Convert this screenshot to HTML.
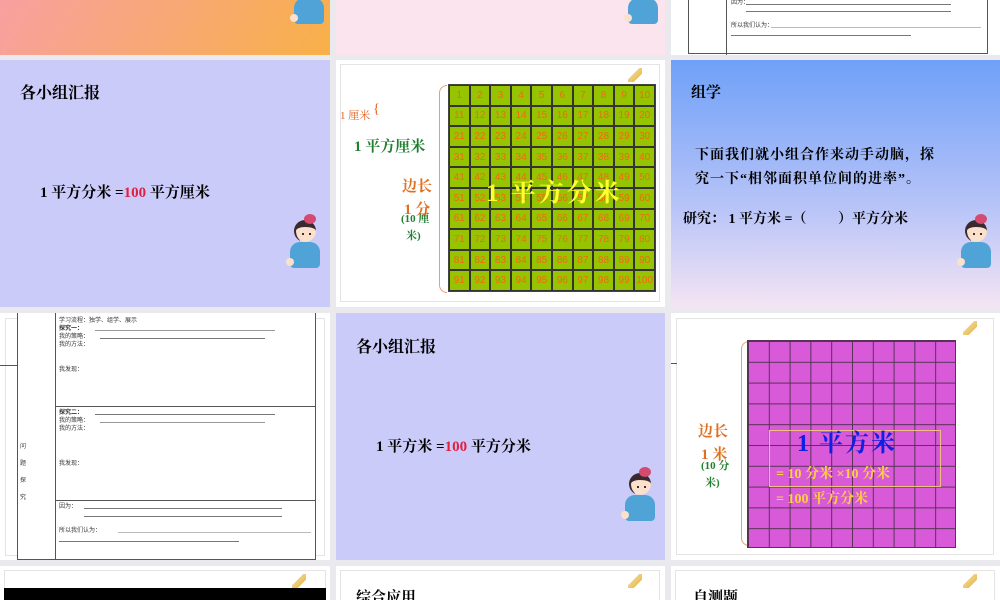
<!DOCTYPE html>
<html><head><meta charset="utf-8"><style>
*{margin:0;padding:0;box-sizing:border-box}
body{width:1000px;height:600px;overflow:hidden;background:#e9e9ee;position:relative;font-family:"Liberation Serif","Noto Serif CJK SC",serif}
.s{position:absolute;overflow:hidden}
.a{position:absolute;white-space:nowrap}
.b{font-weight:bold}
.grid{position:absolute;display:grid;grid-template-columns:repeat(10,1fr);grid-template-rows:repeat(10,1fr);border:1px solid #444}
.grid span{border:0.5px solid #333;display:flex;align-items:center;justify-content:center;font-size:10px;color:#f06a10;font-family:"Liberation Sans",sans-serif}
.girl{position:absolute;width:36px;height:56px}
.girl .h{position:absolute;left:8px;top:6px;width:22px;height:22px;border-radius:50%;background:#fbe0cc;border-top:7px solid #3a2a30;border-left:2px solid #3a2a30}
.girl .h::after{content:"";position:absolute;left:6px;top:6px;width:2px;height:2px;background:#333;box-shadow:7px 0 #333}
.girl .bow{position:absolute;left:18px;top:0;width:12px;height:10px;border-radius:50%;background:#d44a70}
.girl .bd{position:absolute;left:4px;top:28px;width:30px;height:26px;border-radius:10px 10px 4px 4px;background:#4fa3d6}
.girl .hd{position:absolute;left:0;top:44px;width:8px;height:8px;border-radius:50%;background:#fbe0cc}
.frame{position:absolute;border:1px solid #e4e4e4}
.pen{position:absolute;width:14px;height:14px;background:linear-gradient(135deg,transparent 40%,#f0d080 40%,#e8c060 70%,transparent 70%)}
.ln{position:absolute;height:1px;background:#777}
.t{font-family:"Liberation Sans","Noto Sans CJK SC",sans-serif;font-size:6px;color:#333}
</style></head><body>

<div class="s" style="left:0;top:0;width:330px;height:55px;background:linear-gradient(120deg,#f8a0a0,#f8b048)">
 <div class="girl" style="left:290px;top:-30px"><div class="bd"></div><div class="hd"></div></div>
</div>
<div class="s" style="left:336px;top:0;width:329px;height:55px;background:#fce4ee">
 <div class="girl" style="left:288px;top:-30px"><div class="bd"></div><div class="hd"></div></div>
</div>
<div class="s" style="left:671px;top:0;width:329px;height:55px;background:#fff">
 <div style="position:absolute;left:17px;top:-2px;width:300px;height:56px;border:1px solid #555;border-top:none"></div>
 <div style="position:absolute;left:55px;top:0;width:1px;height:55px;background:#555"></div>
 <div class="a t" style="left:60px;top:-3px">因为：</div>
 <div class="ln" style="left:75px;top:4px;width:205px"></div>
 <div class="ln" style="left:75px;top:11px;width:205px"></div>
 <div class="a t" style="left:60px;top:20px">所以我们认为：</div>
 <div class="ln" style="left:100px;top:27px;width:210px;background:#bbb"></div>
 <div class="ln" style="left:60px;top:35px;width:180px"></div>
</div>

<div class="s" style="left:0;top:60px;width:330px;height:247px;background:#cbcbf9">
 <div class="a b" style="left:20px;top:20px;font-size:16px">各小组汇报</div>
 <div class="a b" style="left:40px;top:121px;font-size:15px">1 平方分米 =<span style="color:#e02040">100</span> 平方厘米</div>
 <div class="girl" style="left:286px;top:154px"><div class="bd"></div><div class="h"></div><div class="bow"></div><div class="hd"></div></div>
</div>

<div class="s" style="left:336px;top:60px;width:329px;height:247px;background:#fff">
 <div class="frame" style="left:4px;top:4px;width:320px;height:238px"></div>
 <div class="pen" style="left:292px;top:8px"></div>
 <div class="a" style="left:4px;top:47px;font-size:11px;color:#e06020">1 厘米</div>
 <div class="a" style="left:37px;top:42px;font-size:14px;color:#e06020">{</div>
 <div class="a b" style="left:18px;top:75px;font-size:15px;color:#208030">1 平方厘米</div>
 <div class="a b" style="left:66px;top:115px;font-size:15px;color:#e07020">边长</div>
 <div class="a b" style="left:68px;top:138px;font-size:15px;color:#e07020">1 分</div>
 <div class="a b" style="left:65px;top:150px;font-size:11px;color:#208030">(10 厘</div>
 <div class="a b" style="left:70px;top:167px;font-size:11px;color:#208030">米)</div>
 <div style="position:absolute;left:103px;top:25px;width:8px;height:208px;border:1.5px solid #e8a070;border-right:none;border-radius:8px 0 0 8px"></div>
 <div class="grid" style="left:112px;top:24px;width:208px;height:208px;background:#96c400">
<span>1</span><span>2</span><span>3</span><span>4</span><span>5</span><span>6</span><span>7</span><span>8</span><span>9</span><span>10</span>
<span>11</span><span>12</span><span>13</span><span>14</span><span>15</span><span>16</span><span>17</span><span>18</span><span>19</span><span>20</span>
<span>21</span><span>22</span><span>23</span><span>24</span><span>25</span><span>26</span><span>27</span><span>28</span><span>29</span><span>30</span>
<span>31</span><span>32</span><span>33</span><span>34</span><span>35</span><span>36</span><span>37</span><span>38</span><span>39</span><span>40</span>
<span>41</span><span>42</span><span>43</span><span>44</span><span>45</span><span>46</span><span>47</span><span>48</span><span>49</span><span>50</span>
<span>51</span><span>52</span><span>53</span><span>54</span><span>55</span><span>56</span><span>57</span><span>58</span><span>59</span><span>60</span>
<span>61</span><span>62</span><span>63</span><span>64</span><span>65</span><span>66</span><span>67</span><span>68</span><span>69</span><span>70</span>
<span>71</span><span>72</span><span>73</span><span>74</span><span>75</span><span>76</span><span>77</span><span>78</span><span>79</span><span>80</span>
<span>81</span><span>82</span><span>83</span><span>84</span><span>85</span><span>86</span><span>87</span><span>88</span><span>89</span><span>90</span>
<span>91</span><span>92</span><span>93</span><span>94</span><span>95</span><span>96</span><span>97</span><span>98</span><span>99</span><span>100</span>
 </div>
 <div class="a b" style="left:150px;top:113px;font-size:25px;color:#ffff30;letter-spacing:3px">1 平方分米</div>
</div>

<div class="s" style="left:671px;top:60px;width:329px;height:247px;background:linear-gradient(180deg,#6fa0f8,#b8c4f8 60%,#f4e4f4)">
 <div class="a b" style="left:20px;top:21px;font-size:15px">组学</div>
 <div class="a b" style="left:24px;top:84px;font-size:14px;letter-spacing:1px">下面我们就小组合作来动手动脑，探</div>
 <div class="a b" style="left:24px;top:108px;font-size:14px;letter-spacing:1px">究一下“相邻面积单位间的进率”。</div>
 <div class="a b" style="left:12px;top:148px;font-size:14px">研究： 1 平方米 =（　　 ）平方分米</div>
 <div class="girl" style="left:286px;top:154px"><div class="bd"></div><div class="h"></div><div class="bow"></div><div class="hd"></div></div>
</div>

<div class="s" style="left:0;top:313px;width:330px;height:247px;background:#fff">
 <div class="frame" style="left:5px;top:5px;width:320px;height:238px"></div>
 <div style="position:absolute;left:0;top:52px;width:17px;height:1px;background:#555"></div>
 <div style="position:absolute;left:17px;top:0;width:299px;height:247px;border:1px solid #555;border-top:none;background:#fff"></div>
 <div style="position:absolute;left:55px;top:0;width:1px;height:247px;background:#555"></div>
 <div class="ln" style="left:55px;top:93px;width:261px;background:#555"></div>
 <div class="ln" style="left:55px;top:187px;width:261px;background:#555"></div>
 <div class="a t" style="left:20px;top:126px;line-height:17px;white-space:normal;width:8px">问 题 探 究</div>
 <div class="a t" style="left:59px;top:2px">学习流程：独学、组学、展示</div>
 <div class="a t b" style="left:59px;top:10px">探究一：</div><div class="ln" style="left:95px;top:17px;width:180px;background:#999"></div>
 <div class="a t" style="left:59px;top:18px">我的策略：</div><div class="ln" style="left:100px;top:25px;width:165px"></div>
 <div class="a t" style="left:59px;top:26px">我的方法：</div>
 <div class="a t" style="left:59px;top:51px">我发现：</div>
 <div class="a t b" style="left:59px;top:94px">探究二：</div><div class="ln" style="left:95px;top:101px;width:180px"></div>
 <div class="a t" style="left:59px;top:102px">我的策略：</div><div class="ln" style="left:100px;top:109px;width:165px;background:#999"></div>
 <div class="a t" style="left:59px;top:110px">我的方法：</div>
 <div class="a t" style="left:59px;top:145px">我发现：</div>
 <div class="a t" style="left:59px;top:188px">因为：</div><div class="ln" style="left:84px;top:195px;width:198px"></div>
 <div class="ln" style="left:84px;top:203px;width:198px"></div>
 <div class="a t" style="left:59px;top:212px">所以我们认为：</div><div class="ln" style="left:118px;top:219px;width:193px;background:#bbb"></div>
 <div class="ln" style="left:59px;top:228px;width:180px"></div>
</div>

<div class="s" style="left:336px;top:313px;width:329px;height:247px;background:#cbcbf9">
 <div class="a b" style="left:20px;top:21px;font-size:16px">各小组汇报</div>
 <div class="a b" style="left:40px;top:122px;font-size:15px">1 平方米 =<span style="color:#e02040">100</span> 平方分米</div>
 <div class="girl" style="left:285px;top:154px"><div class="bd"></div><div class="h"></div><div class="bow"></div><div class="hd"></div></div>
</div>

<div class="s" style="left:671px;top:313px;width:329px;height:247px;background:#fff">
 <div class="frame" style="left:5px;top:5px;width:318px;height:237px"></div>
 <div class="pen" style="left:292px;top:8px"></div>
 <div style="position:absolute;left:0;top:50px;width:6px;height:1px;background:#555"></div>
 <div class="a b" style="left:27px;top:107px;font-size:15px;color:#e07020">边长</div>
 <div class="a b" style="left:30px;top:130px;font-size:15px;color:#e07020">1 米</div>
 <div class="a b" style="left:30px;top:144px;font-size:11px;color:#208030">(10 分</div>
 <div class="a b" style="left:34px;top:161px;font-size:11px;color:#208030">米)</div>
 <div style="position:absolute;left:70px;top:28px;width:8px;height:205px;border:1.5px solid #e8a070;border-right:none;border-radius:8px 0 0 8px"></div>
 <div style="position:absolute;left:76px;top:27px;width:209px;height:208px;background-color:#d85ad8;background-image:linear-gradient(#553355 1px,transparent 1px),linear-gradient(90deg,#553355 1px,transparent 1px);background-size:20.8px 20.8px;border:1px solid #553355"></div>
 <div style="position:absolute;left:98px;top:117px;width:172px;height:57px;border:1px solid #f0c080"></div>
 <div class="a b" style="left:126px;top:110px;font-size:24px;color:#1020e0;letter-spacing:2px">1 平方米</div>
 <div class="a b" style="left:105px;top:150px;font-size:14px;color:#ffd040">= 10 分米 ×10 分米</div>
 <div class="a b" style="left:105px;top:175px;font-size:14px;color:#ffd040">= 100 平方分米</div>
</div>

<div class="s" style="left:0;top:566px;width:330px;height:34px;background:#fff">
 <div class="frame" style="left:4px;top:4px;width:322px;height:40px"></div>
 <div class="pen" style="left:292px;top:8px"></div>
 <div style="position:absolute;left:4px;top:22px;width:322px;height:12px;background:#000"></div>
</div>
<div class="s" style="left:336px;top:566px;width:329px;height:34px;background:#fff">
 <div class="frame" style="left:4px;top:4px;width:320px;height:40px"></div>
 <div class="pen" style="left:292px;top:8px"></div>
 <div class="a b" style="left:20px;top:20px;font-size:15px">综合应用</div>
</div>
<div class="s" style="left:671px;top:566px;width:329px;height:34px;background:#fff">
 <div class="frame" style="left:4px;top:4px;width:320px;height:40px"></div>
 <div class="pen" style="left:292px;top:8px"></div>
 <div class="a b" style="left:22px;top:20px;font-size:15px">自测题</div>
</div>
</body></html>
